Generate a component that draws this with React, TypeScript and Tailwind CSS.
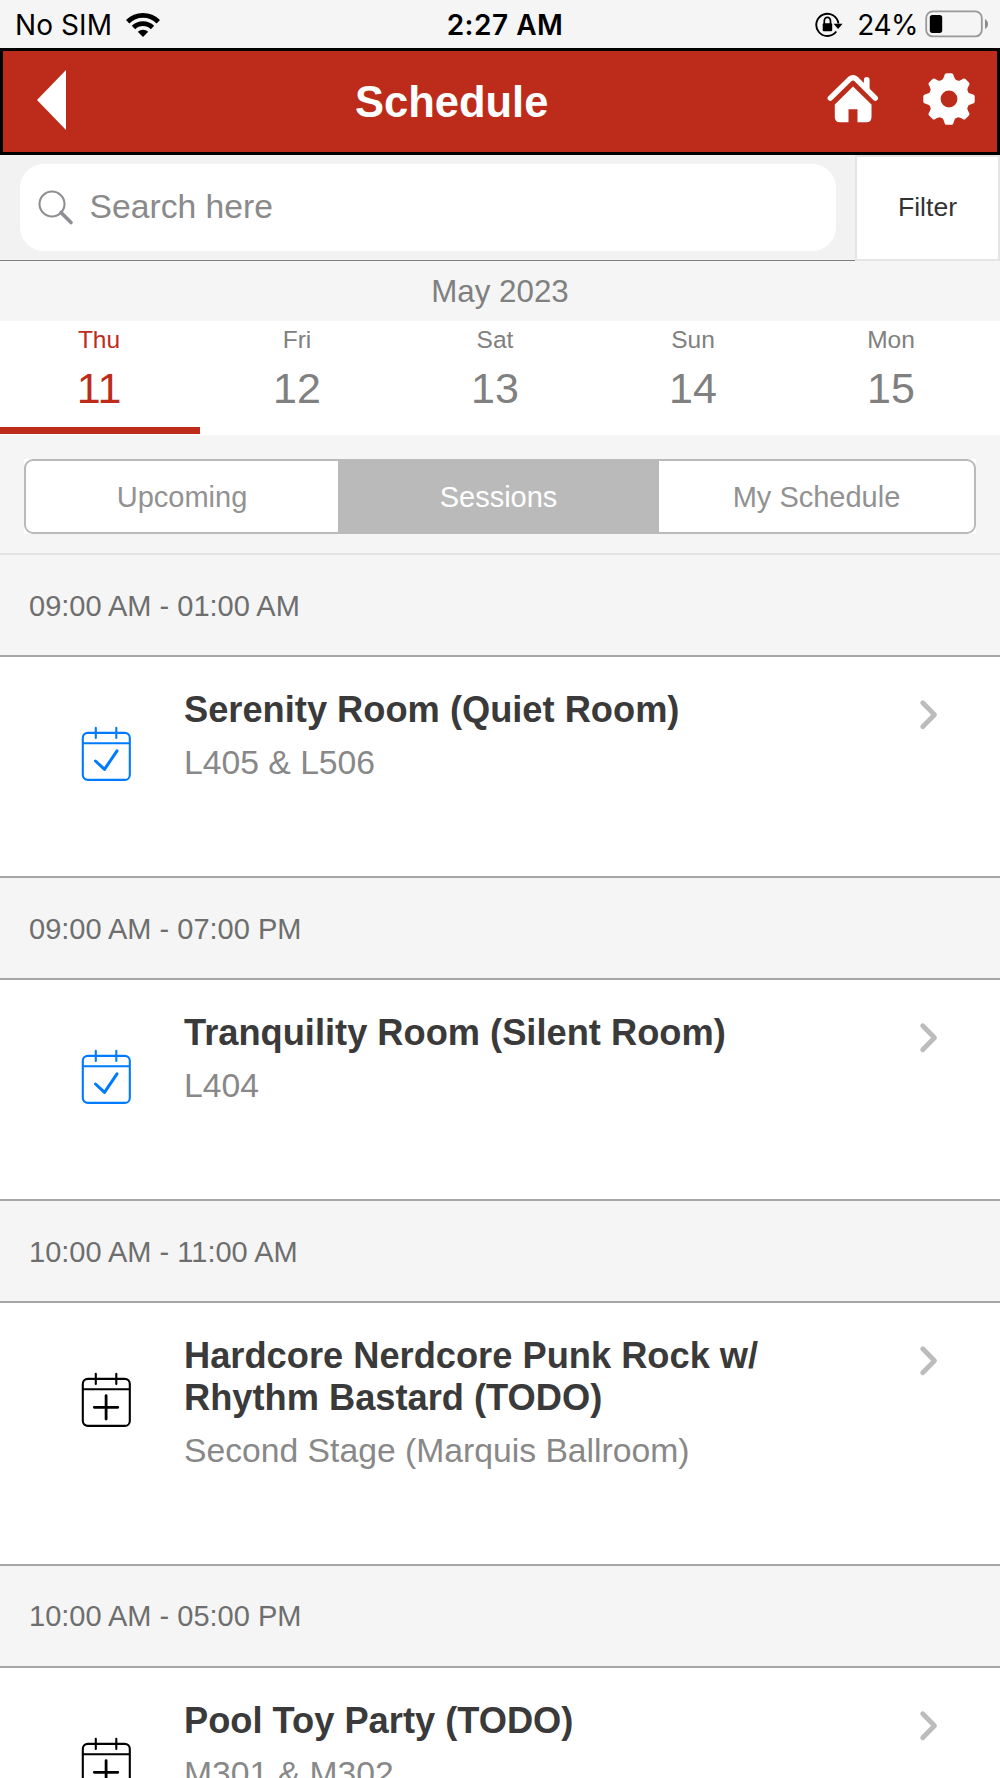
import React, { useState } from 'react';

interface Session {
    time: string;
    title: string;
    location: string;
    added: boolean;
}

const DAYS = [
    { name: 'Thu', date: 11 },
    { name: 'Fri', date: 12 },
    { name: 'Sat', date: 13 },
    { name: 'Sun', date: 14 },
    { name: 'Mon', date: 15 },
];

const TABS = [
    { label: 'Upcoming', width: 'w-[312px]' },
    { label: 'Sessions', width: 'w-[321px]' },
    { label: 'My Schedule', width: 'w-[315px]' },
];

const SESSIONS: Session[] = [
    { time: '09:00 AM - 01:00 AM', title: 'Serenity Room (Quiet Room)', location: 'L405 & L506', added: true },
    { time: '09:00 AM - 07:00 PM', title: 'Tranquility Room (Silent Room)', location: 'L404', added: true },
    {
        time: '10:00 AM - 11:00 AM',
        title: 'Hardcore Nerdcore Punk Rock w/ Rhythm Bastard (TODO)',
        location: 'Second Stage (Marquis Ballroom)',
        added: false,
    },
    { time: '10:00 AM - 05:00 PM', title: 'Pool Toy Party (TODO)', location: 'M301 & M302', added: false },
];

const GEAR_ANGLES = [0, 45, 90, 135, 180, 225, 270, 315];

function WifiIcon() {
    return (
        <svg className="mb-[2px]" width="36" height="26" viewBox="-18 -25 36 26" fill="none" stroke="#000">
            <path d="M-15.3 -15.3A21.6 21.6 0 0 1 15.3 -15.3" strokeWidth="4.8" />
            <path d="M-9.5 -9.5A13.4 13.4 0 0 1 9.5 -9.5" strokeWidth="4.8" />
            <path d="M0 0L-5.2 -5.2A7.4 7.4 0 0 1 5.2 -5.2Z" fill="#000" stroke="none" />
        </svg>
    );
}

function RotationLockIcon() {
    return (
        <svg className="mb-[2px]" width="28" height="26" viewBox="0 0 28 26" fill="none" stroke="#000">
            <path d="M23.4 11.5A11.1 11.1 0 1 0 21.3 19.5" strokeWidth="1.9" />
            <path d="M18.6 11.8H27.6L23.1 17Z" fill="#000" stroke="none" />
            <path d="M9.3 12V8.9A3.1 3.6 0 0 1 15.5 8.9V12" strokeWidth="1.7" />
            <rect x="7.7" y="11.3" width="9.5" height="8" rx="1.2" fill="#000" stroke="none" />
        </svg>
    );
}

function BatteryIcon() {
    return (
        <svg className="mb-[3px]" width="64" height="28" viewBox="0 0 64 28">
            <rect x="1.2" y="1.4" width="55.6" height="25" rx="6.5" fill="none" stroke="#999" strokeWidth="1.8" />
            <rect x="4.8" y="4.9" width="12.4" height="18" rx="2.6" fill="#000" />
            <path d="M60 9C64 11 64 17 60 19Z" fill="#8c8c8c" />
        </svg>
    );
}

function HomeIcon() {
    return (
        <svg width="52" height="50" viewBox="0 0 52 50" fill="none" stroke="#fff">
            <path
                d="M3.3 24.2L22.5 5.3Q26 2.2 29.5 5.3L48.3 24.2"
                strokeWidth="5.4"
                strokeLinecap="round"
                strokeLinejoin="round"
            />
            <path d="M36.9 9V6Q36.9 3 39.7 3Q42.6 3 42.6 6V19L36.9 13.5Z" fill="#fff" stroke="none" />
            <path
                d="M26 12.6L44.5 30.5V43Q44.5 48.3 39.5 48.3H30.5V35.2H21.5V48.3H13Q7.8 48.3 7.8 43V30.5Z"
                fill="#fff"
                stroke="none"
            />
        </svg>
    );
}

function GearIcon() {
    return (
        <svg width="52" height="52" viewBox="-26 -26 52 52" fill="#fff">
            <circle r="14.3" fill="none" stroke="#fff" strokeWidth="11.8" />
            {GEAR_ANGLES.map((angle) => (
                <path
                    key={angle}
                    d="M-8.5 -17.5Q-5.6 -19.5 -4.9 -22.5L-4.4 -24.2Q-4 -25.7 -2.5 -25.7H2.5Q4 -25.7 4.4 -24.2L4.9 -22.5Q5.6 -19.5 8.5 -17.5Z"
                    transform={`rotate(${angle})`}
                />
            ))}
        </svg>
    );
}

function CalendarIcon({ added }: { added: boolean }) {
    return (
        <svg
            width="50"
            height="56"
            viewBox="0 0 50 56"
            fill="none"
            stroke="currentColor"
            strokeWidth="2.1"
            strokeLinecap="round"
            strokeLinejoin="round"
        >
            <rect x="1.8" y="6.9" width="47" height="47" rx="5" />
            <path d="M2 17.2H48M14.8 1.8V12M35.3 1.8V12" />
            {added ? (
                <path d="M14.5 35L23.5 43.4L36 24.8" strokeWidth="3" />
            ) : (
                <path d="M13.3 35.3H36.8M25.1 23.6V47" strokeWidth="2.8" />
            )}
        </svg>
    );
}

function SessionRow({ session }: { session: Session }) {
    return (
        <section>
            <h2 className="flex h-[99.9px] items-center pl-[29px] pt-[3px] text-[29px] text-[#6e6e6e]">
                {session.time}
            </h2>
            <div className="flex items-start border-y-2 border-[#a6a6a6] bg-white pb-[94px] pl-[81px]">
                <div className={session.added ? 'mt-[69px] text-[#007aff]' : 'mt-[69px] text-black'}>
                    <CalendarIcon added={session.added} />
                </div>
                <div className="ml-[53px] mt-[32px] w-[620px]">
                    <h3 className="text-[36.25px] font-bold leading-[41.5px] text-[#3a3a3a]">{session.title}</h3>
                    <p className="mt-[11.7px] text-[33.7px] leading-[40px] text-[#888]">{session.location}</p>
                </div>
                <svg className="ml-[114px] mt-[41px]" width="22" height="34" viewBox="0 0 22 34" fill="none">
                    <path
                        d="M4.7 4.7L16.5 16.7L4.7 28.7"
                        stroke="#bbbcbe"
                        strokeWidth="4.8"
                        strokeLinecap="round"
                        strokeLinejoin="round"
                    />
                </svg>
            </div>
        </section>
    );
}

export default function App() {
    const [activeDate, setActiveDate] = useState(11);
    const [activeTab, setActiveTab] = useState('Sessions');

    return (
        <div className="h-[1778px] w-[1000px] overflow-hidden bg-[#f5f5f5] font-['Liberation_Sans',Arial,sans-serif]">
            {/* Status bar */}
            <div className="grid h-12 grid-cols-[1fr_auto_1fr] items-center pl-[15px] pr-[11px] pt-[3px] font-[Inter,sans-serif] text-[28px] leading-[45px] text-black">
                <div className="flex items-center gap-[13px]">
                    <span className="tracking-[0.1px]">No SIM</span>
                    <WifiIcon />
                </div>
                <span className="pl-[6px] font-semibold tracking-[0.5px]">2:27 AM</span>
                <div className="flex items-center justify-end">
                    <RotationLockIcon />
                    <span className="ml-[14px] mr-[7px] tracking-[-0.5px]">24%</span>
                    <BatteryIcon />
                </div>
            </div>

            {/* Header */}
            <header className="flex h-[107px] items-center border-[3px] border-black bg-[#bd2c1b] pl-[34px] pr-[22px] text-white">
                <button aria-label="Back" className="mb-[3px]">
                    <svg width="30" height="60" viewBox="0 0 30 60">
                        <path d="M0 30L29 0V60Z" fill="#fff" />
                    </svg>
                </button>
                <h1 className="ml-[288px] pt-[2px] text-[43.5px] font-bold leading-none">Schedule</h1>
                <button aria-label="Home" className="ml-auto mb-[6px]">
                    <HomeIcon />
                </button>
                <button aria-label="Settings" className="ml-[44px] mb-[5px]">
                    <GearIcon />
                </button>
            </header>

            {/* Search */}
            <div className="flex h-[106px]">
                <div className="flex w-[855px] items-center border-b border-[#808080] bg-[#f2f2f2] pl-[19.5px] pr-[19px]">
                    <div className="flex h-[87px] w-full items-center rounded-[24px] bg-white pl-[18px]">
                        <svg width="36" height="36" viewBox="0 0 36 36" fill="none" stroke="#8e8e93">
                            <circle cx="14" cy="14" r="12.5" strokeWidth="2.1" />
                            <path d="M23 22.5L33 32.5" strokeWidth="3.6" strokeLinecap="round" />
                        </svg>
                        <span className="ml-4 pb-[2px] text-[33.7px] leading-none text-[#8a8a8a]">Search here</span>
                    </div>
                </div>
                <button className="flex-1 border-2 border-[#e5e5e5] bg-white text-[26.6px] text-[#333]">Filter</button>
            </div>

            {/* Day picker */}
            <div className="flex h-[60px] items-center justify-center pt-[2px] text-[31.3px] text-[#808080]">May 2023</div>
            <div className="flex h-[114px] bg-white">
                {DAYS.map((day) => (
                    <button
                        key={day.date}
                        onClick={() => setActiveDate(day.date)}
                        className={
                            day.date === activeDate
                                ? 'flex w-[198px] flex-col items-center pt-[5px] text-[#bd2c1b]'
                                : 'flex w-[198px] flex-col items-center pt-[5px] text-[#808080]'
                        }
                    >
                        <span className="text-[24.5px] leading-7">{day.name}</span>
                        <span className="mt-[10px] text-[43px] leading-[48px]">{day.date}</span>
                        {day.date === activeDate && <span className="mt-[15px] h-[7px] w-[200px] self-start bg-[#bd2c1b]" />}
                    </button>
                ))}
            </div>

            {/* Tabs */}
            <div className="border-b-2 border-[#e4e4e4] px-6 pb-[19px] pt-6">
                <div className="bg-white">
                    <div className="flex h-[75px] rounded-[9px] border-2 border-[#bababa]">
                        {TABS.map((tab) => (
                            <button
                                key={tab.label}
                                onClick={() => setActiveTab(tab.label)}
                                className={`${tab.width} ${
                                    tab.label === activeTab ? 'bg-[#bababa] text-white' : 'text-[#929292]'
                                } pt-[2px] text-[29px]`}
                            >
                                {tab.label}
                            </button>
                        ))}
                    </div>
                </div>
            </div>

            {/* Session list */}
            {SESSIONS.map((session) => (
                <SessionRow key={session.time} session={session} />
            ))}
        </div>
    );
}
